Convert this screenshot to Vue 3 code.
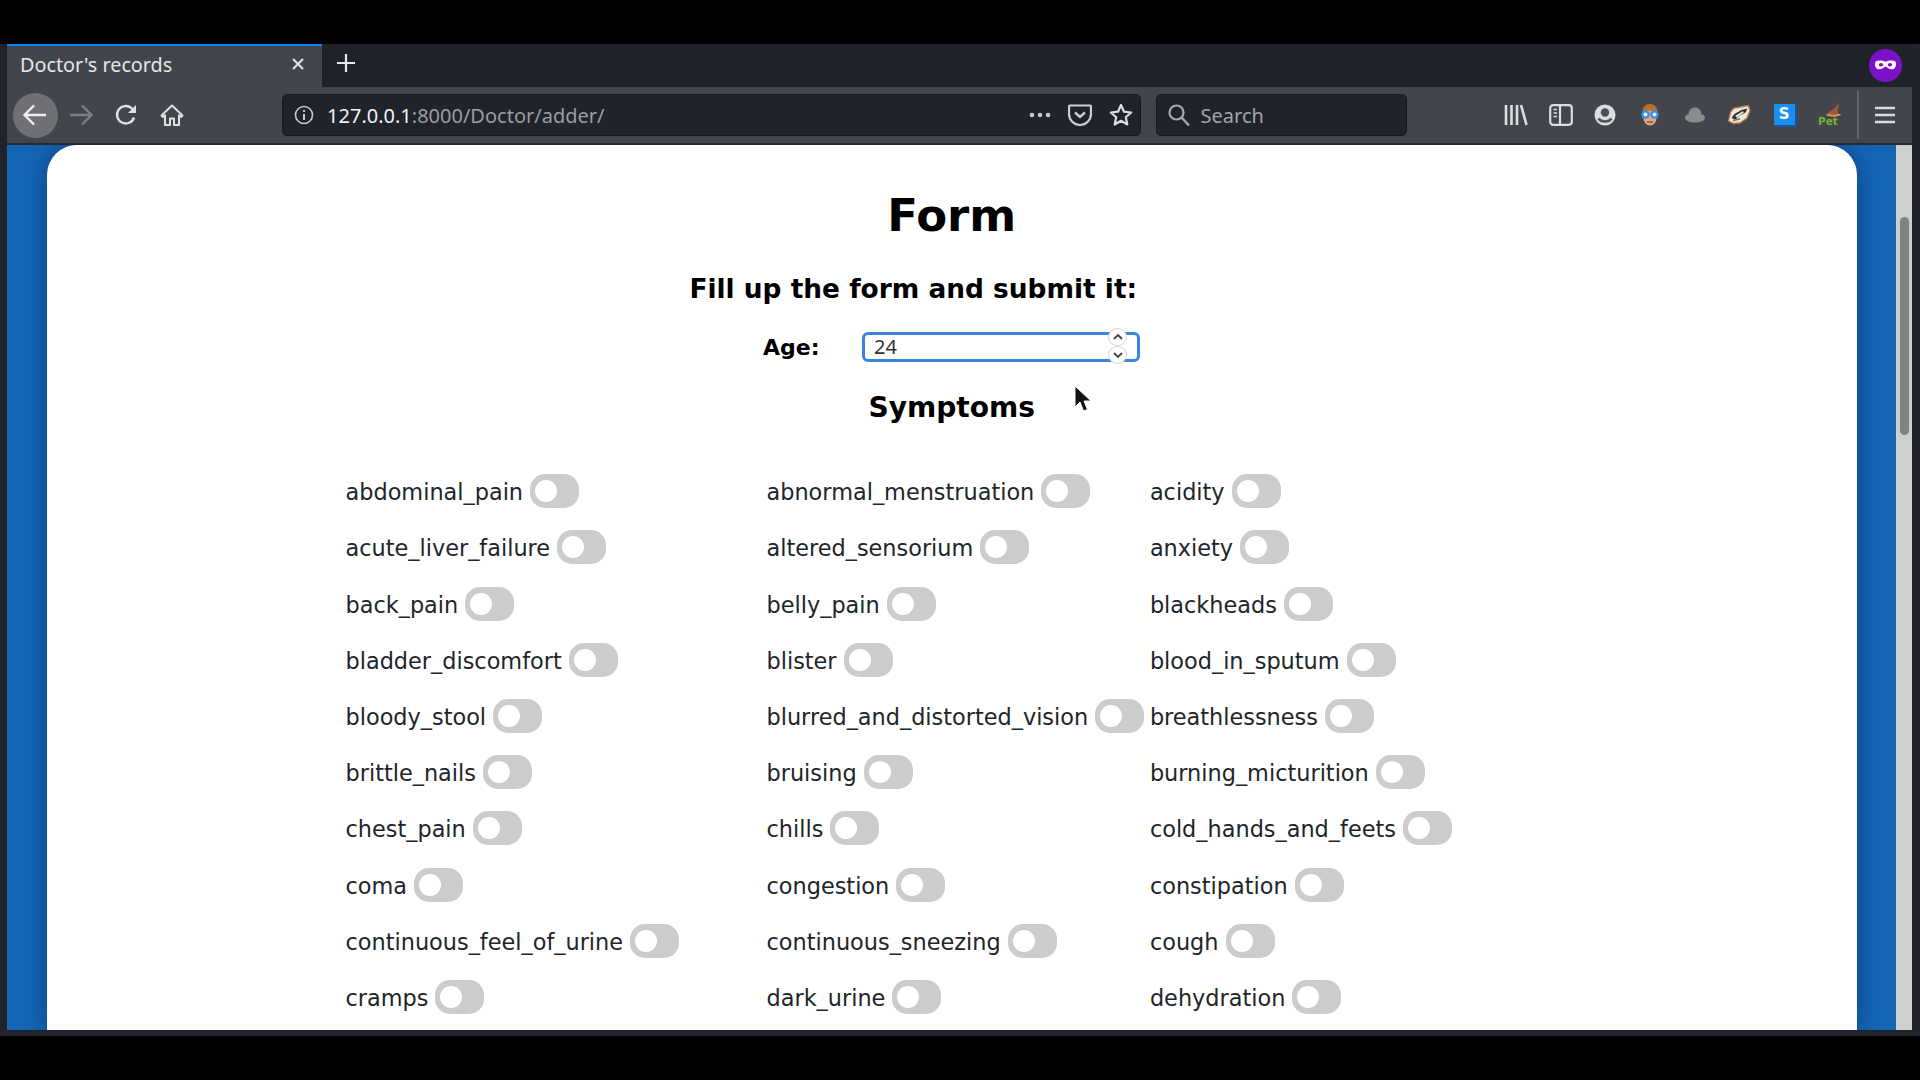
<script setup>
const symptoms = [
  'abdominal_pain','abnormal_menstruation','acidity',
  'acute_liver_failure','altered_sensorium','anxiety',
  'back_pain','belly_pain','blackheads',
  'bladder_discomfort','blister','blood_in_sputum',
  'bloody_stool','blurred_and_distorted_vision','breathlessness',
  'brittle_nails','bruising','burning_micturition',
  'chest_pain','chills','cold_hands_and_feets',
  'coma','congestion','constipation',
  'continuous_feel_of_urine','continuous_sneezing','cough',
  'cramps','dark_urine','dehydration'
]
</script>

<template>
  <div class="screen">
    <div class="window">
      <div class="tabbar">
        <div class="tab">
          <span class="tab-title">Doctor's records</span>
          <svg class="tab-close" width="16" height="16" viewBox="0 0 16 16"><path d="M3 3l10 10M13 3L3 13" stroke="#e4e4e6" stroke-width="2" fill="none"/></svg>
        </div>
        <svg class="new-tab" width="22" height="22" viewBox="0 0 22 22"><path d="M11 2v18M2 11h18" stroke="#e8e8ea" stroke-width="2.2" fill="none"/></svg>
        <div class="grow"></div>
        <svg class="mask" width="33" height="33" viewBox="0 0 33 33">
          <circle cx="16.5" cy="16.5" r="16.5" fill="#7b12c9"/>
          <path d="M6.500 12.500c3-1.600 7-1 10 .3 3-1.300 7-1.900 10-.3 1 3 .4 6.500-2 7.500-2.800 1-5.200-.6-8-2.400-2.800 1.800-5.200 3.400-8 2.400-2.400-1-3-4.500-2-7.500z" fill="#fff"/>
          <ellipse cx="12" cy="15.800" rx="2.200" ry="1.800" fill="#7b12c9"/>
          <ellipse cx="21" cy="15.800" rx="2.200" ry="1.800" fill="#7b12c9"/>
        </svg>
      </div>

      <div class="toolbar">
        <div class="back">
          <svg width="26" height="26" viewBox="0 0 26 26"><path d="M24 13H3M12 3.500L2.500 13l9.500 9.500" stroke="#f0f0f2" stroke-width="2.400" fill="none"/></svg>
        </div>
        <div class="tool nudge-fwd">
          <svg width="26" height="26" viewBox="0 0 26 26"><path d="M2 13h21M14 3.500l9.500 9.500-9.500 9.500" stroke="#7c7e82" stroke-width="2.400" fill="none"/></svg>
        </div>
        <div class="tool">
          <svg width="24" height="24" viewBox="0 0 24 24"><path d="M20 14.500A8.700 8.700 0 1 1 17.500 5.200L21 8" stroke="#e0e0e2" stroke-width="2.400" fill="none"/><path d="M22 2v8h-8" fill="#e0e0e2"/></svg>
        </div>
        <div class="tool nudge-home">
          <svg width="24" height="24" viewBox="0 0 24 24"><path d="M1.500 12.500L12 2.500l10.500 10-1.500 1.500-2-1.800V22h-5v-6.500h-4V22H5v-9.800L3 14z" stroke="#e0e0e2" stroke-width="2" stroke-linejoin="round" fill="none"/></svg>
        </div>

        <div class="urlbar">
          <svg class="info" width="20" height="20" viewBox="0 0 20 20"><circle cx="10" cy="10" r="8.500" stroke="#c8c8ca" stroke-width="1.600" fill="none"/><path d="M10 9v6" stroke="#c8c8ca" stroke-width="2"/><circle cx="10" cy="6" r="1.200" fill="#c8c8ca"/></svg>
          <span class="url"><span class="host">127.0.0.1</span>:8000/Doctor/adder/</span>
          <div class="grow"></div>
          <svg class="dots" width="24" height="6" viewBox="0 0 24 6"><circle cx="4" cy="3" r="2.300" fill="#c8c8ca"/><circle cx="12" cy="3" r="2.300" fill="#c8c8ca"/><circle cx="20" cy="3" r="2.300" fill="#c8c8ca"/></svg>
          <svg class="pocket" width="24" height="24" viewBox="0 0 24 24"><path d="M2 2.500h20a1 1 0 0 1 1 1V11a11 11 0 0 1-22 0V3.500a1 1 0 0 1 1-1z" stroke="#cfcfd1" stroke-width="2.200" fill="none"/><path d="M7 9.500l5 4.500 5-4.500" stroke="#cfcfd1" stroke-width="2.400" fill="none"/></svg>
          <svg class="star" width="24" height="24" viewBox="0 0 24 24"><path d="M12 2l3 6.700 7.200.8-5.400 4.800 1.500 7.200L12 17.800l-6.300 3.700 1.500-7.200L1.800 9.500 9 8.700z" stroke="#dedee0" stroke-width="2.200" stroke-linejoin="round" fill="none"/></svg>
        </div>

        <div class="searchbar">
          <svg width="24" height="24" viewBox="0 0 24 24"><circle cx="9.500" cy="9.500" r="7" stroke="#a8a9ac" stroke-width="2.200" fill="none"/><path d="M14.500 14.500l7.500 8" stroke="#a8a9ac" stroke-width="2.400"/></svg>
          <span class="search-text">Search</span>
        </div>

        <div class="icons">
          <div class="tool">
            <svg width="24" height="22" viewBox="0 0 24 22"><path d="M2 1v20M7.500 1v20M13 1v20M17 1l5.500 20" stroke="#dcdcde" stroke-width="2.600" fill="none"/></svg>
          </div>
          <div class="tool">
            <svg width="24" height="22" viewBox="0 0 24 22"><rect x="1.200" y="1.200" width="21.600" height="19.600" rx="3" stroke="#dcdcde" stroke-width="2.200" fill="none"/><path d="M11 1v20" stroke="#dcdcde" stroke-width="2.200"/><path d="M4.500 5.500h3.500M4.500 9h3.500M4.500 12.500h3.500" stroke="#dcdcde" stroke-width="1.600"/></svg>
          </div>
          <div class="tool">
            <svg width="22" height="22" viewBox="0 0 22 22"><circle cx="11" cy="11" r="10.500" fill="#dcdcde"/><circle cx="11" cy="8.500" r="4.200" fill="#4e5155"/><path d="M4.500 14.500c2.500 4 10.500 4 13 0" stroke="#4e5155" stroke-width="2.400" fill="none"/></svg>
          </div>
          <div class="tool">
            <svg width="20" height="24" viewBox="0 0 20 24">
              <path d="M2.500 10C2 4 6 1 10 1s8 3 7.500 9l.5 5H2z" fill="#b5702f"/>
              <ellipse cx="10" cy="15" rx="6.500" ry="7.500" fill="#e3a77e"/>
              <circle cx="5.500" cy="11.500" r="4.200" fill="#2f8fe6"/><circle cx="14.500" cy="11.500" r="4.200" fill="#2f8fe6"/>
              <circle cx="5.500" cy="11.500" r="2" fill="#e8f4ff"/><circle cx="14.500" cy="11.500" r="2" fill="#e8f4ff"/>
              <path d="M7 19h6" stroke="#8c4a2a" stroke-width="1.500"/>
            </svg>
          </div>
          <div class="tool">
            <svg width="22" height="16" viewBox="0 0 22 16"><path d="M1 10.500c0-2.200 2-3 3.500-3.300C5 2.800 7.500.5 11 .5s6 2.300 6.500 6.700c1.500.3 3.500 1.100 3.500 3.300 0 3.200-4.500 5-10 5s-10-1.800-10-5z" fill="#8a8c88"/></svg>
          </div>
          <div class="tool">
            <svg width="24" height="20" viewBox="0 0 24 20">
              <path d="M1.500 16L3.500 7 7 3l4-.5L18 1l3.500-.5 1.500 5-3 7.500-7 5-6.500.5z" fill="#eee7dc" stroke="#b8763c" stroke-width="1.300"/>
              <path d="M4.500 13l3-4 7-4 6-1.500-2 4-6.500 3.500-3.500 3.500z" fill="#2b2d2f"/>
              <path d="M8 11l8-5 .8 1.500-7 5z" fill="#eee7dc"/>
              <path d="M6 15.500l7-1.500" stroke="#6d6f70" stroke-width="1.500"/>
            </svg>
          </div>
          <div class="tool">
            <div class="s-ext"><span>S</span></div>
          </div>
          <div class="tool">
            <svg width="26" height="24" viewBox="0 0 26 24">
              <path d="M11 12.500c1-3.500 3.500-5 6.500-6.500l6-5.500-2 7.500 2 4.500c-4 1.500-9 1.500-12.500 0z" fill="#9c5a37"/>
              <path d="M10.500 11.500c4 1.500 9 1.500 14 0" stroke="#dba05f" stroke-width="1.500" fill="none"/>
              <text x="2" y="22" font-family="'DejaVu Sans', sans-serif" font-size="10.500" font-weight="700" fill="#6fb52e">Pet</text>
            </svg>
          </div>
          <div class="separator"></div>
          <div class="tool menu">
            <svg width="24" height="20" viewBox="0 0 24 20"><path d="M2 3h20M2 10h20M2 17h20" stroke="#dcdcde" stroke-width="2.600"/></svg>
          </div>
        </div>
      </div>

      <div class="viewport">
        <div class="page">
          <div class="card">
            <h1 class="title">Form</h1>
            <h3 class="fill">Fill up the form and submit it:</h3>
            <div class="age-row">
              <label class="age-label" for="age">Age:</label>
              <div class="age-field">
                <input id="age" class="age-input" type="number" value="24" />
                <div class="spin spin-up">
                  <svg width="12" height="8" viewBox="0 0 12 8"><path d="M2 6l4-4 4 4" stroke="#444" stroke-width="1.800" fill="none"/></svg>
                </div>
                <div class="spin spin-down">
                  <svg width="12" height="8" viewBox="0 0 12 8"><path d="M2 2l4 4 4-4" stroke="#444" stroke-width="1.800" fill="none"/></svg>
                </div>
              </div>
            </div>
            <h3 class="symptoms-title">Symptoms</h3>
            <div class="grid">
              <label v-for="s in symptoms" :key="s" class="symptom">
                <span>{{ s }}</span>
                <span class="switch"></span>
              </label>
            </div>
          </div>
        </div>
        <div class="scrollbar"><div class="thumb"></div></div>
        <svg class="cursor" width="18" height="28" viewBox="0 0 18 28"><path d="M1 1v21l5-5 3.500 9 4-1.500-3.500-8.500h7z" fill="#111" stroke="#fff" stroke-width="1"/></svg>
      </div>
    </div>
  </div>
</template>

<style scoped>
.screen {
  width: 1920px;
  height: 1080px;
  background: #000;
  padding-top: 44px;
  box-sizing: border-box;
  overflow: hidden;
  font-family: "Noto Sans", sans-serif;
}
.window {
  height: 992px;
  box-sizing: border-box;
  background: #20232a;
  padding: 0 8px 6px 7px;
  display: flex;
  flex-direction: column;
}
.grow { flex: 1; }
.tabbar {
  height: 43px;
  flex: none;
  display: flex;
  align-items: center;
  background: #1f2229;
}
.tab {
  width: 315px;
  height: 43px;
  box-sizing: border-box;
  background: #42464c;
  border-top: 2px solid #0a84ff;
  padding: 0 16px 5px 13px;
  display: flex;
  align-items: center;
  justify-content: space-between;
}
.tab-title {
  color: #e6e7e9;
  font-size: 19.800px;
}
.new-tab { margin: -5px 0 0 13px; }
.mask { margin-right: 10px; margin-top: -1px; }
.toolbar {
  height: 58px;
  flex: none;
  box-sizing: border-box;
  background: #42464c;
  border-bottom: 2px solid #26282d;
  display: flex;
  align-items: center;
  padding-left: 5.500px;
}
.back {
  width: 45px;
  height: 45px;
  flex: none;
  border-radius: 50%;
  background: #6f7174;
  display: flex;
  align-items: center;
  justify-content: center;
}
.tool {
  width: 44.700px;
  height: 44px;
  flex: none;
  display: flex;
  align-items: center;
  justify-content: center;
}
.nudge-fwd { margin-left: 1.500px; }
.nudge-home { margin-left: 1px; }
.urlbar {
  margin-left: 87.500px;
  width: 859px;
  height: 42px;
  flex: none;
  box-sizing: border-box;
  background: #20232a;
  border: 1px solid #17191d;
  border-radius: 5px;
  display: flex;
  align-items: center;
  padding: 0 6px 0 11px;
}
.info { flex: none; }
.url {
  margin-left: 13.500px;
  margin-top: 1px;
  color: #9b9da1;
  font-size: 20px;
}
.host { color: #f2f2f4; }
.dots { margin-right: 5.400px; }
.pocket { margin-right: 9px; margin-left: 10px; }
.star { margin-left: 8px; margin-right: 1px; }
.searchbar {
  margin-left: 15px;
  width: 251px;
  height: 42px;
  flex: none;
  box-sizing: border-box;
  background: #20232a;
  border: 1px solid #17191d;
  border-radius: 5px;
  display: flex;
  align-items: center;
  padding-left: 10px;
}
.search-text {
  margin-left: 10px;
  margin-top: 1px;
  color: #a3a5a9;
  font-size: 20px;
}
.icons {
  margin-left: 87px;
  display: flex;
  align-items: center;
}
.s-ext {
  width: 21px;
  height: 21px;
  background: #1b8ff0;
  box-shadow: 2px 2px 0 #10599c;
  display: flex;
  align-items: center;
  justify-content: center;
  margin-top: -2px;
}
.s-ext span {
  color: #fff;
  font: 700 15px "DejaVu Sans", sans-serif;
}
.separator {
  width: 1.500px;
  height: 48px;
  margin-left: 6px;
  background: #63666b;
}
.menu { margin-left: 4px; }

.viewport {
  flex: 1;
  min-height: 0;
  display: flex;
  position: relative;
  overflow: hidden;
}
.page {
  flex: 1;
  min-width: 0;
  background: #1565b5;
  padding: 0 39px 0 39.500px;
}
.card {
  background: #fff;
  border-radius: 30px 30px 0 0;
  box-shadow: 0 0 22px rgba(0, 20, 60, 0.45);
  min-height: 100%;
  box-sizing: border-box;
  padding-top: 44.800px;
  font-family: "DejaVu Sans", sans-serif;
  color: #000;
}
.title {
  margin: 0;
  font-size: 45px;
  line-height: 52px;
  font-weight: 700;
  text-align: center;
}
.fill {
  margin: 30px 0 0;
  padding-right: 77px;
  font-size: 26.400px;
  line-height: 34px;
  font-weight: 700;
  text-align: center;
}
.age-row {
  margin: 26.300px 0 0 716.500px;
  display: flex;
  align-items: center;
}
.age-label {
  width: 99px;
  font-size: 22px;
  font-weight: 700;
}
.age-field {
  position: relative;
  width: 278px;
  height: 30px;
}
.age-input {
  display: block;
  width: 100%;
  height: 100%;
  box-sizing: border-box;
  border: 3px solid #3b84e0;
  border-radius: 6px;
  padding: 0 9px 2px;
  outline: none;
  appearance: textfield;
  -moz-appearance: textfield;
  font: 20px "Noto Sans", sans-serif;
  color: #333;
  background: #fff;
}
.age-input::-webkit-outer-spin-button,
.age-input::-webkit-inner-spin-button {
  -webkit-appearance: none;
  margin: 0;
}
.spin {
  position: absolute;
  left: 246px;
  width: 19px;
  height: 18px;
  box-sizing: border-box;
  background: #fff;
  border: 1px solid #d5d5d2;
  border-radius: 50%;
  display: flex;
  align-items: center;
  justify-content: center;
}
.spin-up { top: -4px; }
.spin-down { top: 14px; }
.symptoms-title {
  margin: 27.700px 0 0;
  font-size: 28.100px;
  line-height: 36px;
  font-weight: 700;
  text-align: center;
}
.grid {
  margin-top: 38.400px;
  padding-left: 299px;
  display: grid;
  grid-template-columns: 421px 383.400px auto;
  grid-auto-rows: 56.200px;
}
.symptom {
  display: flex;
  align-items: center;
  gap: 7px;
  font-size: 22.400px;
  color: #212529;
}
.switch {
  position: relative;
  flex: none;
  width: 49px;
  height: 34px;
  border-radius: 15px;
  background: #ccc;
  margin-top: -2px;
}
.switch::before {
  content: "";
  position: absolute;
  left: 5px;
  top: 6px;
  width: 22px;
  height: 22px;
  border-radius: 50%;
  background: #fff;
}
.scrollbar {
  width: 16px;
  flex: none;
  background: #cfcfcf;
  padding-top: 72px;
  box-sizing: border-box;
}
.thumb {
  width: 9px;
  height: 218px;
  margin-left: 4px;
  border-radius: 5px;
  background: #7f8483;
}
.cursor {
  position: absolute;
  left: 1067px;
  top: 240px;
}
</style>
